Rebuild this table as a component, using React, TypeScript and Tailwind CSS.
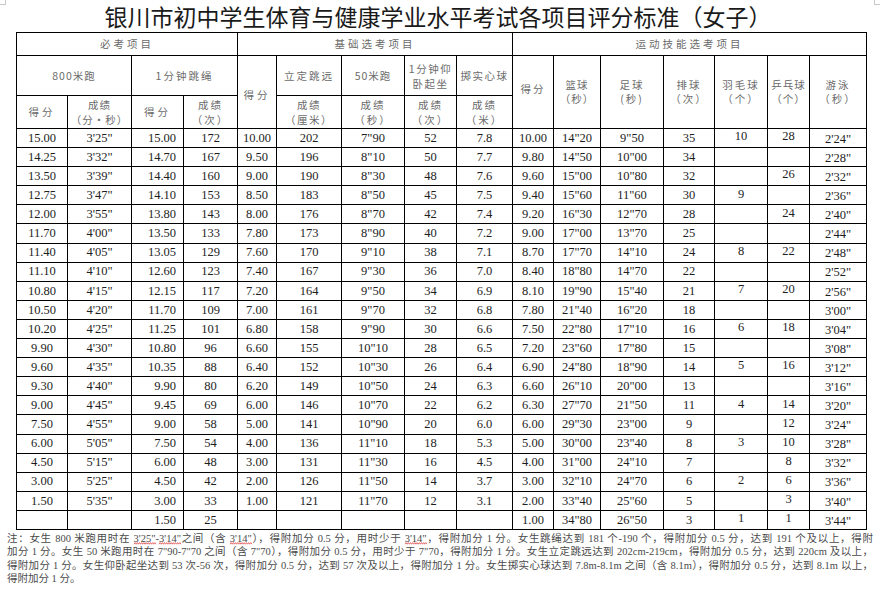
import React from "react";

const rows: string[][] = [
  ["15.00", "3'25\"", "15.00", "172", "10.00", "202", "7\"90", "52", "7.8", "10.00", "14\"20", "9\"50", "35", "10", "28", "2'24\""],
  ["14.25", "3'32\"", "14.70", "167", "9.50", "196", "8\"10", "50", "7.7", "9.80", "14\"50", "10\"00", "34", "", "", "2'28\""],
  ["13.50", "3'39\"", "14.40", "160", "9.00", "190", "8\"30", "48", "7.6", "9.60", "15\"00", "10\"80", "32", "", "26", "2'32\""],
  ["12.75", "3'47\"", "14.10", "153", "8.50", "183", "8\"50", "45", "7.5", "9.40", "15\"60", "11\"60", "30", "9", "", "2'36\""],
  ["12.00", "3'55\"", "13.80", "143", "8.00", "176", "8\"70", "42", "7.4", "9.20", "16\"30", "12\"70", "28", "", "24", "2'40\""],
  ["11.70", "4'00\"", "13.50", "133", "7.80", "173", "8\"90", "40", "7.2", "9.00", "17\"00", "13\"70", "25", "", "", "2'44\""],
  ["11.40", "4'05\"", "13.05", "129", "7.60", "170", "9\"10", "38", "7.1", "8.70", "17\"70", "14\"10", "24", "8", "22", "2'48\""],
  ["11.10", "4'10\"", "12.60", "123", "7.40", "167", "9\"30", "36", "7.0", "8.40", "18\"80", "14\"70", "22", "", "", "2'52\""],
  ["10.80", "4'15\"", "12.15", "117", "7.20", "164", "9\"50", "34", "6.9", "8.10", "19\"90", "15\"40", "21", "7", "20", "2'56\""],
  ["10.50", "4'20\"", "11.70", "109", "7.00", "161", "9\"70", "32", "6.8", "7.80", "21\"40", "16\"20", "18", "", "", "3'00\""],
  ["10.20", "4'25\"", "11.25", "101", "6.80", "158", "9\"90", "30", "6.6", "7.50", "22\"80", "17\"10", "16", "6", "18", "3'04\""],
  ["9.90", "4'30\"", "10.80", "96", "6.60", "155", "10\"10", "28", "6.5", "7.20", "23\"60", "17\"80", "15", "", "", "3'08\""],
  ["9.60", "4'35\"", "10.35", "88", "6.40", "152", "10\"30", "26", "6.4", "6.90", "24\"80", "18\"90", "14", "5", "16", "3'12\""],
  ["9.30", "4'40\"", "9.90", "80", "6.20", "149", "10\"50", "24", "6.3", "6.60", "26\"10", "20\"00", "13", "", "", "3'16\""],
  ["9.00", "4'45\"", "9.45", "69", "6.00", "146", "10\"70", "22", "6.2", "6.30", "27\"70", "21\"50", "11", "4", "14", "3'20\""],
  ["7.50", "4'55\"", "9.00", "58", "5.00", "141", "10\"90", "20", "6.0", "6.00", "29\"30", "23\"00", "9", "", "12", "3'24\""],
  ["6.00", "5'05\"", "7.50", "54", "4.00", "136", "11\"10", "18", "5.3", "5.00", "30\"00", "23\"40", "8", "3", "10", "3'28\""],
  ["4.50", "5'15\"", "6.00", "48", "3.00", "131", "11\"30", "16", "4.5", "4.00", "31\"00", "24\"10", "7", "", "8", "3'32\""],
  ["3.00", "5'25\"", "4.50", "42", "2.00", "126", "11\"50", "14", "3.7", "3.00", "32\"10", "24\"70", "6", "2", "6", "3'36\""],
  ["1.50", "5'35\"", "3.00", "33", "1.00", "121", "11\"70", "12", "3.1", "2.00", "33\"40", "25\"60", "5", "", "3", "3'40\""],
  ["", "", "1.50", "25", "", "", "", "", "", "1.00", "34\"80", "26\"50", "3", "1", "1", "3'44\""],
];

const cell = "border-r border-b border-black flex items-center justify-center";
const hd = "[font-family:'Noto_Sans_CJK_SC',sans-serif] text-[10.5px] leading-[14px] text-[#6b6b6b] text-center";

const wavePath = Array.from({ length: 10 })
  .map((_, i) => `${i === 0 ? "M" : "L"}${i * 2} 2.2 L${i * 2 + 1} 0.6`)
  .join(" ") + " L20 2.2";

function Wavy({ children }: { children: React.ReactNode }) {
  return (
    <span className="relative inline-block leading-[13.4px]">
      {children}
      <svg
        className="absolute left-0 bottom-[0px] w-full h-[3px] overflow-visible"
        viewBox="0 0 20 3"
        preserveAspectRatio="none"
      >
        <path d={wavePath} fill="none" stroke="#d33" strokeWidth="0.7" vectorEffect="non-scaling-stroke" />
      </svg>
    </span>
  );
}

export default function App() {
  return (
    <div className="relative w-[880px] h-[597px] bg-white overflow-hidden">
      <div className="absolute left-0 top-0 w-[6px] h-[5px] border-r border-b border-[#c8c8c8]" />
      <div className="absolute left-[874px] top-0 w-[6px] h-[5px] border-l border-b border-[#c8c8c8]" />

      <div className="h-[32px] flex items-center justify-center pr-[4px] [font-family:'Noto_Sans_CJK_SC',sans-serif] text-[23px] leading-[32px] text-[#1a1a1a]">
        银川市初中学生体育与健康学业水平考试各项目评分标准（女子）
      </div>

      <div className="ml-[16px] w-[851px] grid grid-cols-[51px_64px_52px_54px_39px_65px_63px_52px_56px_41px_47px_63px_51px_53px_42px_57px] grid-rows-[23px_40px_33px_repeat(21,19.1px)] border-l border-t border-black">
        {/* row 1 */}
        <div className={`${cell} ${hd} col-start-1 col-span-4 row-start-1 tracking-[3px]`}>必考项目</div>
        <div className={`${cell} ${hd} col-start-5 col-span-5 row-start-1 tracking-[3px]`}>基础选考项目</div>
        <div className={`${cell} ${hd} col-start-10 col-span-7 row-start-1 tracking-[3px]`}>运动技能选考项目</div>

        {/* row 2 */}
        <div className={`${cell} ${hd} col-start-1 col-span-2 row-start-2 tracking-[1px]`}>800米跑</div>
        <div className={`${cell} ${hd} col-start-3 col-span-2 row-start-2 tracking-[2px]`}>1分钟跳绳</div>
        <div className={`${cell} ${hd} col-start-5 row-start-2 row-span-2 tracking-[3px] pt-[6px]`}>得分</div>
        <div className={`${cell} ${hd} col-start-6 row-start-2 tracking-[2px]`}>立定跳远</div>
        <div className={`${cell} ${hd} col-start-7 row-start-2 tracking-[1px]`}>50米跑</div>
        <div className={`${cell} ${hd} col-start-8 row-start-2 tracking-[1.5px] leading-[15px]`}>
          1分钟仰<br />卧起坐
        </div>
        <div className={`${cell} ${hd} col-start-9 row-start-2 tracking-[1.5px]`}>掷实心球</div>

        <div className={`${cell} ${hd} col-start-10 row-start-2 row-span-2 tracking-[2px] pb-[6px]`}>得分</div>
        <div className={`${cell} ${hd} col-start-11 row-start-2 row-span-2 tracking-[1px]`}>篮球<br />（秒）</div>
        <div className={`${cell} ${hd} col-start-12 row-start-2 row-span-2 tracking-[2px]`}>足球<br />(秒)</div>
        <div className={`${cell} ${hd} col-start-13 row-start-2 row-span-2 tracking-[2px]`}>排球<br />（次）</div>
        <div className={`${cell} ${hd} col-start-14 row-start-2 row-span-2 tracking-[2px]`}>羽毛球<br />（个）</div>
        <div className={`${cell} ${hd} col-start-15 row-start-2 row-span-2 tracking-[1px]`}>乒乓球<br />（个）</div>
        <div className={`${cell} ${hd} col-start-16 row-start-2 row-span-2 tracking-[2px]`}>游泳<br />（秒）</div>

        {/* row 3 */}
        <div className={`${cell} ${hd} col-start-1 row-start-3 tracking-[3px]`}>得分</div>
        <div className={`${cell} ${hd} col-start-2 row-start-3 tracking-[1px] leading-[15px]`}>成绩<br />（分·秒）</div>
        <div className={`${cell} ${hd} col-start-3 row-start-3 tracking-[3px]`}>得分</div>
        <div className={`${cell} ${hd} col-start-4 row-start-3 tracking-[2px] leading-[15px]`}>成绩<br />（次）</div>
        <div className={`${cell} ${hd} col-start-6 row-start-3 tracking-[1.5px] leading-[15px]`}>成绩<br />（厘米）</div>
        <div className={`${cell} ${hd} col-start-7 row-start-3 tracking-[2px] leading-[15px]`}>成绩<br />（秒）</div>
        <div className={`${cell} ${hd} col-start-8 row-start-3 tracking-[2px] leading-[15px]`}>成绩<br />（次）</div>
        <div className={`${cell} ${hd} col-start-9 row-start-3 tracking-[2px] leading-[15px]`}>成绩<br />（米）</div>

        {/* data */}
        {rows.map((r, ri) =>
          r.map((v, ci) => {
            let extra = "";
            if (ci === 2) extra = "!justify-end pr-[7px]";
            if (ci === 13 || ci === 14) extra = "pb-[3px]";
            if (ci === 15) extra = "pt-[2px]";
            return (
              <div
                key={`${ri}-${ci}`}
                className={`${cell} ${extra} [font-family:'Liberation_Serif',serif] text-[12.5px] leading-none text-[#1e1e1e]`}
              >
                {v}
              </div>
            );
          })
        )}
      </div>

      <div className="mt-[2px] pl-[7px] w-[873px] [font-family:'Liberation_Serif','Noto_Sans_CJK_SC',serif] text-[10.5px] leading-[13.4px] text-[#4a4a4a]">
        <div className="h-[13.4px] text-justify [text-align-last:justify] whitespace-nowrap">
          注：女生 800 米跑用时在 <Wavy>3'25"</Wavy>-<Wavy>3'14"</Wavy>之间（含 <Wavy>3'14"</Wavy>），得附加分 0.5 分，用时少于 <Wavy>3'14"</Wavy>，得附加分 1 分。女生跳绳达到 181 个-190 个，得附加分 0.5 分，达到 191 个及以上，得附
        </div>
        <div className="h-[13.4px] text-justify [text-align-last:justify] whitespace-nowrap">
          加分 1 分。女生 50 米跑用时在 7"90-7"70 之间（含 7"70），得附加分 0.5 分，用时少于 7"70，得附加分 1 分。女生立定跳远达到 202cm-219cm，得附加分 0.5 分，达到 220cm 及以上，
        </div>
        <div className="h-[13.4px] text-justify [text-align-last:justify] whitespace-nowrap">
          得附加分 1 分。女生仰卧起坐达到 53 次-56 次，得附加分 0.5 分，达到 57 次及以上，得附加分 1 分。女生掷实心球达到 7.8m-8.1m 之间（含 8.1m），得附加分 0.5 分，达到 8.1m 以上，
        </div>
        <div>得附加分 1 分。</div>
      </div>
    </div>
  );
}
